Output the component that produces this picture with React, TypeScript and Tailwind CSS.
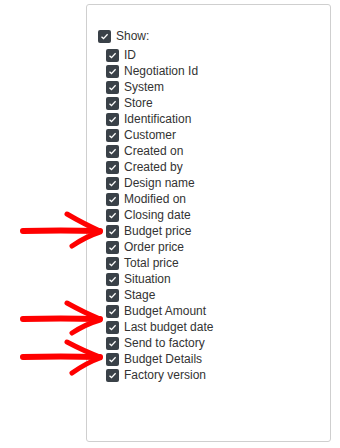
import React from "react";

const fields = [
  "ID",
  "Negotiation Id",
  "System",
  "Store",
  "Identification",
  "Customer",
  "Created on",
  "Created by",
  "Design name",
  "Modified on",
  "Closing date",
  "Budget price",
  "Order price",
  "Total price",
  "Situation",
  "Stage",
  "Budget Amount",
  "Last budget date",
  "Send to factory",
  "Budget Details",
  "Factory version",
];

const Box = () => (
  <span className="flex h-[13px] w-[13px] shrink-0 items-center justify-center rounded-[2px] bg-[#3a4148]">
    <svg width="9" height="9" viewBox="0 0 9 9">
      <path d="M1.5 4.8 L3.5 6.6 L7.6 2.2" fill="none" stroke="#fff" strokeWidth="1.3" />
    </svg>
  </span>
);

const Arrow = ({ y, top, bottom }: { y: number; top: number; bottom: number }) => (
  <g>
    <path d={`M23 ${y} Q60 ${y - 1} 100 ${y}`} strokeWidth="6" />
    <path d={`M67 ${top} Q85 ${(top + y) / 2 + 2} 100 ${y}`} />
    <path d={`M72 ${bottom} Q86 ${(bottom + y) / 2 - 2} 100 ${y + 1}`} />
  </g>
);

export default function App() {
  return (
    <div
      className="relative h-[448px] w-[340px] bg-white text-[12px] text-[#333]"
      style={{ fontFamily: "Arial, 'Liberation Sans', sans-serif" }}
    >
      <div className="pt-[4px] pl-[86px]">
        <div className="h-[438px] w-[245px] rounded-[3px] border border-[#cfcfcf] pt-[23px] pl-[11px]">
          <label className="flex h-[16px] items-center gap-[5px]">
            <Box />
            <span>Show:</span>
          </label>
          <div className="mt-[3px] pl-[8px]">
            {fields.map((f) => (
              <label key={f} className="flex h-[16px] items-center gap-[5px]">
                <Box />
                <span>{f}</span>
              </label>
            ))}
          </div>
        </div>
      </div>
      <svg
        className="pointer-events-none absolute left-0 top-0"
        width="340"
        height="448"
        fill="none"
        stroke="#ff0000"
        strokeWidth="5"
        strokeLinecap="round"
        strokeLinejoin="round"
      >
        <Arrow y={231} top={214} bottom={246} />
        <Arrow y={319} top={303} bottom={333} />
        <Arrow y={357} top={342} bottom={373} />
      </svg>
    </div>
  );
}
